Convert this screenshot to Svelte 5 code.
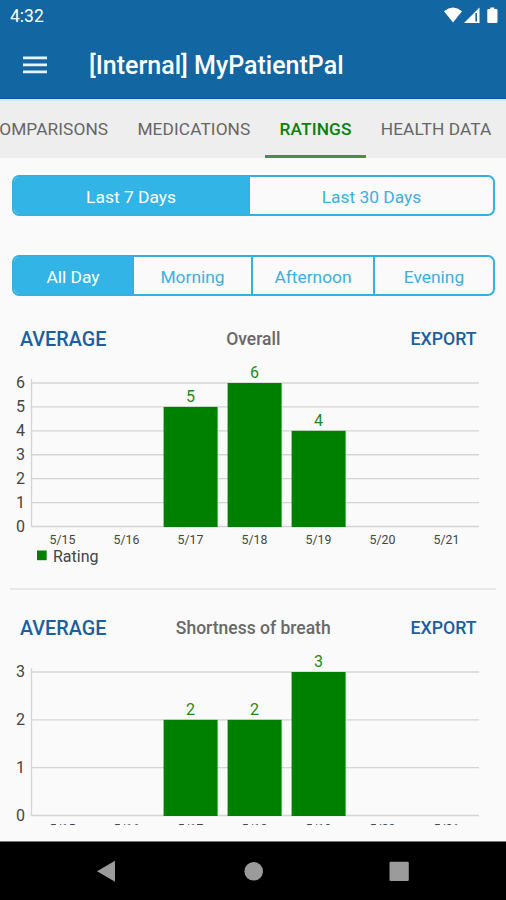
<script>
    let tabs = [
        { id: 'comparisons', label: 'COMPARISONS' },
        { id: 'medications', label: 'MEDICATIONS' },
        { id: 'ratings', label: 'RATINGS' },
        { id: 'health', label: 'HEALTH DATA' },
    ];
    let active_tab = 'ratings';

    const ranges = ['Last 7 Days', 'Last 30 Days'];
    const periods = ['All Day', 'Morning', 'Afternoon', 'Evening'];
    let range = ranges[0];
    let period = periods[0];

    const days = ['5/15', '5/16', '5/17', '5/18', '5/19', '5/20', '5/21'];
    const charts = [
        { title: 'Overall', max: 6, values: [null, null, 5, 6, 4, null, null] },
        { title: 'Shortness of breath', max: 3, values: [null, null, 2, 2, 3, null, null] },
    ];

    // Plot area inside each chart svg
    const left = 31;
    const right = 479;
    const base = 166.5;
    const plot_height = 143.5;
    const slot = 64;

    function y(value, max) {
        return base - (value / max) * plot_height;
    }

    function ticks(max) {
        return Array.from({ length: max + 1 }, (_, i) => i);
    }
</script>

<div class="screen">
    <header>
        <div class="status">
            <span>4:32</span>
            <svg width="54" height="18" viewBox="0 0 54 18" fill="#fff">
                <path d="M0 4.2Q9 -3.2 18 4.2L9 15.5Z" />
                <path d="M20 16L35.5 0.5V16Z" />
                <path d="M32.2 6V14.5" fill="none" stroke="#1266a2" stroke-width="1.6" />
                <path d="M46.3 .4h4v1.7h2.2q1 0 1 1V15q0 1-1 1h-8.2q-1 0-1-1V3.1q0-1 1-1h2Z" />
            </svg>
        </div>
        <div class="toolbar">
            <button class="menu" aria-label="Menu">
                <svg width="24" height="18" viewBox="0 0 24 18">
                    <path d="M0 1.8H24M0 8.8H24M0 15.8H24" stroke="#e9f3ff" stroke-width="2.7" />
                </svg>
            </button>
            <h1>[Internal] MyPatientPal</h1>
        </div>
    </header>

    <nav class="tabs">
        {#each tabs as tab}
            <button class="tab {tab.id}" class:active={tab.id === active_tab} on:click={() => active_tab = tab.id}>{tab.label}</button>
        {/each}
    </nav>

    <main>
        <div class="segments ranges">
            {#each ranges as item}
                <button class:selected={item === range} on:click={() => range = item}>{item}</button>
            {/each}
        </div>
        <div class="segments periods">
            {#each periods as item}
                <button class:selected={item === period} on:click={() => period = item}>{item}</button>
            {/each}
        </div>

        {#each charts as chart}
            <section>
                <div class="chart-header">
                    <button class="average">AVERAGE</button>
                    <h2>{chart.title}</h2>
                    <button class="export">EXPORT</button>
                </div>
                <svg class="chart" width="506" height="210" viewBox="0 0 506 210">
                    {#each ticks(chart.max) as tick}
                        <line x1={left} x2={right} y1={y(tick, chart.max)} y2={y(tick, chart.max)} />
                        <text class="tick" x="25" y={y(tick, chart.max) + 5.3}>{tick}</text>
                    {/each}
                    <line x1="31.5" x2="31.5" y1="19" y2={base} />
                    {#each chart.values as value, i}
                        {#if value !== null}
                            <rect x={left + slot * i + 4.6} y={y(value, chart.max)} width="54" height={base + .5 - y(value, chart.max)} />
                            <text class="value" x={left + slot * i + 31.6} y={y(value, chart.max) - 5.3}>{value}</text>
                        {/if}
                        <text class="day" x={left + slot * i + 31.4} y="183.9">{days[i]}</text>
                    {/each}
                    <rect x="37" y="190.5" width="9.7" height="9.7" />
                    <text class="legend" x="53" y="201.7">Rating</text>
                </svg>
            </section>
        {/each}
    </main>

    <footer>
        <svg width="506" height="58" viewBox="0 0 506 58" fill="#9b9b9b">
            <path d="M97 29.3L115 18.8V39.8Z" />
            <circle cx="253.7" cy="29.3" r="9.3" />
            <rect x="389.5" y="19.7" width="19.3" height="19.3" rx="1.2" />
        </svg>
    </footer>
</div>

<style>
    :global(body) {
        background: #fafafa;
    }

    .screen {
        display: flex;
        flex-direction: column;
        width: 506px;
        height: 900px;
        overflow: hidden;
        background: #fafafa;
        font-family: Roboto, 'Liberation Sans', sans-serif;
    }

    button {
        margin: 0;
        padding: 0;
        border: 0;
        background: none;
        font: inherit;
        letter-spacing: inherit;
        color: inherit;
        white-space: nowrap;
    }

    svg {
        display: block;
    }

    header {
        height: 99px;
        flex: none;
        box-sizing: border-box;
        border-bottom: 1px solid #07569a;
        background: #1266a2;
        color: #fff;
    }

    .status {
        display: flex;
        justify-content: space-between;
        height: 32px;
        padding: 7px 8px 0 10px;
        box-sizing: border-box;
        font-size: 17.5px;
        line-height: 18px;
    }

    .toolbar {
        display: flex;
        align-items: center;
        height: 66px;
        padding-left: 23px;
    }

    .menu {
        margin-right: 42px;
    }

    h1 {
        margin: 2px 0 0;
        font-size: 25px;
        font-weight: 500;
        line-height: 30px;
        white-space: nowrap;
    }

    .tabs {
        display: flex;
        flex: none;
        justify-content: flex-end;
        height: 59px;
        box-sizing: border-box;
        border-top: 2px solid #e2e4ea;
        background: #eee;
        color: #666;
        font-size: 17.3px;
        letter-spacing: 0.1px;
    }

    .tab {
        flex: none;
        box-sizing: border-box;
        padding: 2px 14.6px 0;
        border-bottom: 3px solid transparent;
    }

    .tab.active {
        border-bottom-color: #459045;
        color: #0b800b;
        font-weight: 500;
    }

    main {
        flex: none;
        height: 667px;
        box-sizing: border-box;
        padding-top: 17px;
        overflow: hidden;
    }

    .segments {
        display: grid;
        height: 41px;
        margin: 0 11px 0 12px;
        box-sizing: border-box;
        border: 2px solid #35b1df;
        border-radius: 7px;
        overflow: hidden;
        color: #3dafe0;
        font-size: 17.4px;
    }

    .segments button {
        padding-top: 2px;
    }

    .segments button + button {
        border-left: 2px solid #35b1df;
    }

    .segments .selected {
        background: #33b4e7;
        color: #fff;
    }

    .ranges {
        grid-template-columns: 234px 1fr;
        margin-bottom: 39px;
    }

    .periods {
        grid-template-columns: 118px 119px 122px 1fr;
    }

    section {
        height: 294px;
        padding-top: 31px;
        box-sizing: border-box;
    }

    section + section {
        position: relative;
        padding-top: 26px;
    }

    section + section::before {
        content: '';
        position: absolute;
        top: -2px;
        left: 10px;
        right: 10px;
        height: 2px;
        background: #e8e8e8;
    }

    .chart-header {
        display: grid;
        grid-template-columns: 1fr auto 1fr;
        align-items: center;
        height: 24px;
        padding: 0 29.5px 0 20px;
        color: #1a5f9f;
        font-weight: 500;
    }

    .average {
        justify-self: start;
        font-size: 19.8px;
    }

    .export {
        justify-self: end;
        font-size: 17.7px;
    }

    h2 {
        margin: 0 -5px 0 5px;
        color: #686868;
        font-size: 17.5px;
        font-weight: 500;
    }

    .chart {
        margin-top: 9px;
    }

    .chart line {
        stroke: #d4d4d4;
        stroke-width: 1.3;
    }

    .chart rect {
        fill: #008000;
    }

    .chart text {
        fill: #444;
        font-size: 16px;
    }

    .chart .tick {
        text-anchor: end;
    }

    .chart .value {
        fill: #1b8a1b;
        text-anchor: middle;
    }

    .chart .day {
        font-size: 12.3px;
        text-anchor: middle;
    }

    footer {
        flex: none;
        margin-top: auto;
        height: 59px;
        box-sizing: border-box;
        border-top: 1px solid #777;
        background: #000;
    }
</style>
